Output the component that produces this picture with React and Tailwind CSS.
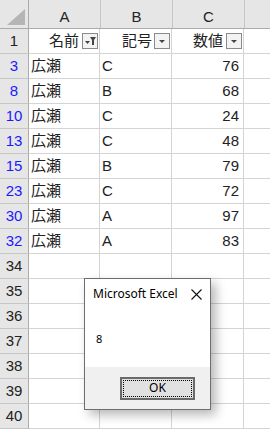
import React from "react";

const rows = [
  { n: "1", head: true },
  { n: "3", a: "広瀬", b: "C", c: "76", blue: true },
  { n: "8", a: "広瀬", b: "B", c: "68", blue: true },
  { n: "10", a: "広瀬", b: "C", c: "24", blue: true },
  { n: "13", a: "広瀬", b: "C", c: "48", blue: true },
  { n: "15", a: "広瀬", b: "B", c: "79", blue: true },
  { n: "23", a: "広瀬", b: "C", c: "72", blue: true },
  { n: "30", a: "広瀬", b: "A", c: "97", blue: true },
  { n: "32", a: "広瀬", b: "A", c: "83", blue: true },
  { n: "34" },
  { n: "35" },
  { n: "36" },
  { n: "37" },
  { n: "38" },
  { n: "39" },
  { n: "40" },
];

const font = { fontFamily: '"Liberation Sans", "Noto Sans CJK JP", sans-serif' };

function FilterBtn({ funnel }) {
  return (
    <div className="w-[16px] h-[16px] border border-[#8a8a8a] bg-[#f3f3f3] flex items-center justify-center shrink-0">
      <svg width="14" height="14" viewBox="0 0 14 14">
        {funnel ? (
          <>
            <polygon points="2,7 7,7 4.5,10" fill="#444" />
            <polygon points="7,3 13,3 11,6 11,11 9,11 9,6" fill="#444" />
          </>
        ) : (
          <polygon points="4,6 10,6 7,9" fill="#444" />
        )}
      </svg>
    </div>
  );
}

export default function App() {
  return (
    <div className="relative w-[270px] h-[430px] overflow-hidden bg-white text-[15px]" style={font}>
      {/* column header */}
      <div className="flex h-[29px] bg-[#e6e6e6] border-b border-[#ababab]">
        <div className="w-[29px] shrink-0 border-r border-[#ababab] relative flex items-end justify-end p-[3px]">
          <svg width="20" height="16" viewBox="0 0 20 16">
            <polygon points="20,0 20,16 2,16" fill="#b5b5b5" />
          </svg>
        </div>
        <div className="w-[72px] shrink-0 border-r border-[#c6c6c6] flex items-center justify-center pt-[6px] text-[#222]">A</div>
        <div className="w-[72px] shrink-0 border-r border-[#c6c6c6] flex items-center justify-center pt-[6px] text-[#222]">B</div>
        <div className="w-[72px] shrink-0 border-r border-[#c6c6c6] flex items-center justify-center pt-[6px] text-[#222]">C</div>
        <div className="flex-1" />
      </div>
      {rows.map((r) => (
        <div key={r.n} className="flex h-[25px]">
          <div
            className={`w-[29px] shrink-0 bg-[#e6e6e6] border-r border-b border-[#ababab] border-b-[#c6c6c6] flex items-center justify-center ${
              r.blue ? "text-[#1a1aff]" : "text-[#222]"
            }`}
          >
            {r.n}
          </div>
          {r.head ? (
            <>
              <div className="w-[71px] shrink-0 border-r border-b border-[#d4d4d4] flex items-center justify-end pr-[1px] gap-[3px] text-[#222]">
                <span>名前</span>
                <FilterBtn funnel />
              </div>
              <div className="w-[72px] shrink-0 border-r border-b border-[#d4d4d4] flex items-center justify-end pr-[1px] gap-[2px] text-[#222]">
                <span>記号</span>
                <FilterBtn />
              </div>
              <div className="w-[72px] shrink-0 border-r border-b border-[#d4d4d4] flex items-center justify-end pr-[1px] gap-[3px] text-[#222]">
                <span>数値</span>
                <FilterBtn />
              </div>
            </>
          ) : (
            <>
              <div className="w-[71px] shrink-0 border-r border-b border-[#d4d4d4] flex items-center pl-[2px] text-[#222]">{r.a}</div>
              <div className="w-[72px] shrink-0 border-r border-b border-[#d4d4d4] flex items-center pl-[2px] text-[#222]">{r.b}</div>
              <div className="w-[72px] shrink-0 border-r border-b border-[#d4d4d4] flex items-center justify-end pr-[4px] text-[#222]">{r.c}</div>
            </>
          )}
          <div className="flex-1 border-b border-[#d4d4d4]" />
        </div>
      ))}

      {/* dialog */}
      <div
        className="absolute left-[84px] top-[278px] w-[127px] h-[132px] border border-[#6e6e6e] bg-white flex flex-col shadow-[5px_5px_10px_rgba(0,0,0,0.28)]"
        style={{ fontFamily: '"Noto Sans", "Open Sans", sans-serif' }}
      >
        <div className="flex items-center justify-between h-[30px] pl-[8px] pr-[8px] text-[12px] text-black">
          <span>Microsoft Excel</span>
          <svg width="11" height="11" viewBox="0 0 11 11">
            <path d="M0.5 0.5L10.5 10.5M10.5 0.5L0.5 10.5" stroke="#111" strokeWidth="1.1" />
          </svg>
        </div>
        <div className="flex-1 pl-[11px] pt-[22px] text-[11px] text-black">8</div>
        <div className="h-[42px] bg-[#f0f0f0] flex items-center justify-end pr-[15px]">
          <div className="w-[75px] h-[23px] border-2 border-[#6a6a6a] bg-[#e1e1e1] p-[1px] flex">
            <div className="flex-1 border border-dotted border-black flex items-center justify-center text-[12px] text-black">
              OK
            </div>
          </div>
        </div>
      </div>
    </div>
  );
}
